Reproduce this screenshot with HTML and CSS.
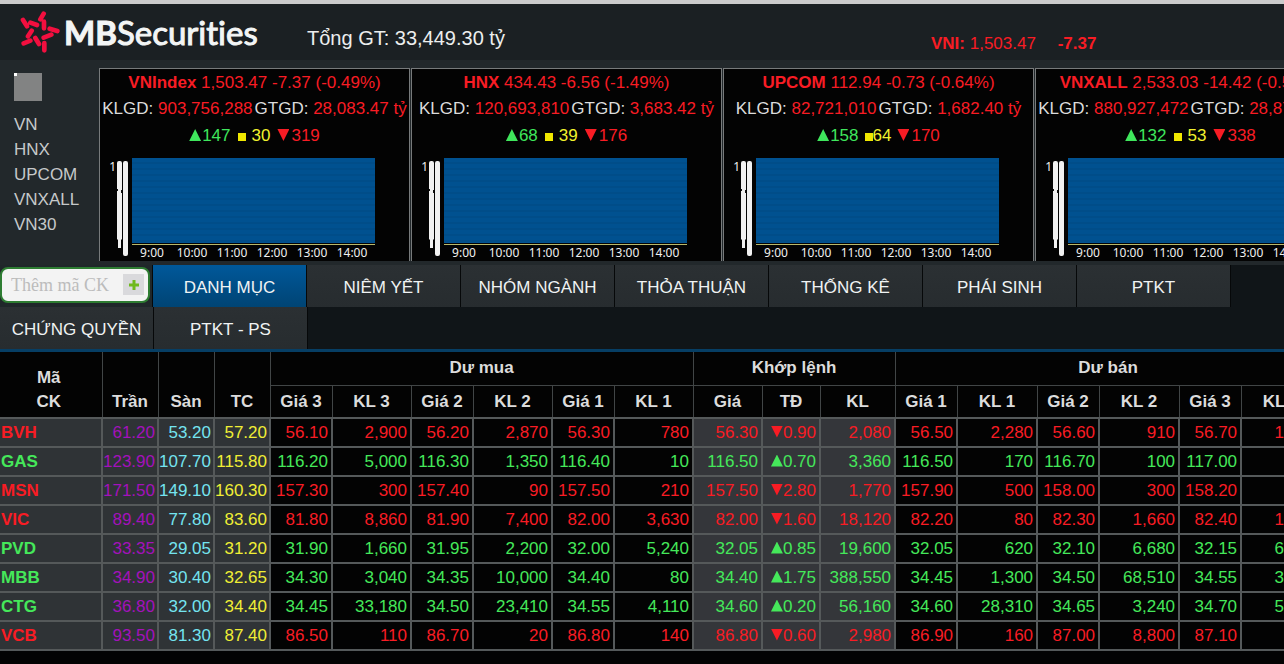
FILE: index.html
```html
<!DOCTYPE html>
<html lang="vi">
<head>
<meta charset="utf-8">
<title>MBSecurities</title>
<link rel="stylesheet" href="styles.css">
</head>
<body>
<header class="topbar">
  <a class="logo" href="#">
    <svg class="logo-mark" viewBox="30 18 123 126" aria-hidden="true">
      <path d="M91 43L101 26M102 50V70M61 53L81 60M39 45L51 64M119 71L142 78M101 98L124 89M54 94L65 77M41 115L61 107M76 99L87 117M103 114V136"/>
    </svg>
    <span class="logo-text"><b>MB</b>Securities</span>
  </a>
  <p class="total">Tổng GT: 33,449.30 tỷ</p>
  <p class="ticker"><b>VNI:</b> 1,503.47 <b class="ticker-change">-7.37</b></p>
</header>

<section class="market">
  <nav class="indices">
    <span class="thumb"></span>
    <a href="#">VN</a>
    <a href="#">HNX</a>
    <a href="#">UPCOM</a>
    <a href="#">VNXALL</a>
    <a href="#">VN30</a>
  </nav>
  <div class="cards">
    <article class="card">
      <p class="red"><b>VNIndex</b> 1,503.47 -7.37 (-0.49%)</p>
      <p>KLGD: <span class="red">903,756,288</span><span class="turnover">GTGD: </span><span class="red">28,083.47 tỷ</span></p>
      <p class="counts"><span class="green"><i class="tri-up"></i>147</span><span class="yellow"><i class="box"></i>30</span><span class="red"><i class="tri-down"></i>319</span></p>
      <div class="chart">
        <span class="scale">1</span>
        <svg class="axis" viewBox="0 0 12 98" aria-hidden="true"><path d="M1 5Q1 3 3 3H4Q6 3 6 5V81L5 82V90H2V82L1 81ZM7 5Q7 3 9 3H10Q12 3 12 5V96Q12 98 10 98H9Q7 98 7 96Z"/><path class="notch" d="M1 31H2V33H1ZM5 32H6V35H5Z"/></svg>
        <div class="plot"></div>
        <div class="times"><span>9:00</span><span>10:00</span><span>11:00</span><span>12:00</span><span>13:00</span><span>14:00</span></div>
      </div>
    </article>
    <article class="card">
      <p class="red"><b>HNX</b> 434.43 -6.56 (-1.49%)</p>
      <p>KLGD: <span class="red">120,693,810</span><span class="turnover">GTGD: </span><span class="red">3,683.42 tỷ</span></p>
      <p class="counts"><span class="green"><i class="tri-up"></i>68</span><span class="yellow"><i class="box"></i>39</span><span class="red"><i class="tri-down"></i>176</span></p>
      <div class="chart">
        <span class="scale">1</span>
        <svg class="axis" viewBox="0 0 12 98" aria-hidden="true"><path d="M1 5Q1 3 3 3H4Q6 3 6 5V81L5 82V90H2V82L1 81ZM7 5Q7 3 9 3H10Q12 3 12 5V96Q12 98 10 98H9Q7 98 7 96Z"/><path class="notch" d="M1 31H2V33H1ZM5 32H6V35H5Z"/></svg>
        <div class="plot"></div>
        <div class="times"><span>9:00</span><span>10:00</span><span>11:00</span><span>12:00</span><span>13:00</span><span>14:00</span></div>
      </div>
    </article>
    <article class="card">
      <p class="red"><b>UPCOM</b> 112.94 -0.73 (-0.64%)</p>
      <p>KLGD: <span class="red">82,721,010</span><span class="turnover">GTGD: </span><span class="red">1,682.40 tỷ</span></p>
      <p class="counts counts-tight"><span class="green"><i class="tri-up"></i>158</span><span class="yellow"><i class="box"></i>64</span><span class="red"><i class="tri-down"></i>170</span></p>
      <div class="chart">
        <span class="scale">1</span>
        <svg class="axis" viewBox="0 0 12 98" aria-hidden="true"><path d="M1 5Q1 3 3 3H4Q6 3 6 5V81L5 82V90H2V82L1 81ZM7 5Q7 3 9 3H10Q12 3 12 5V96Q12 98 10 98H9Q7 98 7 96Z"/><path class="notch" d="M1 31H2V33H1ZM5 32H6V35H5Z"/></svg>
        <div class="plot"></div>
        <div class="times"><span>9:00</span><span>10:00</span><span>11:00</span><span>12:00</span><span>13:00</span><span>14:00</span></div>
      </div>
    </article>
    <article class="card">
      <p class="red"><b>VNXALL</b> 2,533.03 -14.42 (-0.57%)</p>
      <p>KLGD: <span class="red">880,927,472</span><span class="turnover">GTGD: </span><span class="red">28,870.00 tỷ</span></p>
      <p class="counts"><span class="green"><i class="tri-up"></i>132</span><span class="yellow"><i class="box"></i>53</span><span class="red"><i class="tri-down"></i>338</span></p>
      <div class="chart">
        <span class="scale">1</span>
        <svg class="axis" viewBox="0 0 12 98" aria-hidden="true"><path d="M1 5Q1 3 3 3H4Q6 3 6 5V81L5 82V90H2V82L1 81ZM7 5Q7 3 9 3H10Q12 3 12 5V96Q12 98 10 98H9Q7 98 7 96Z"/><path class="notch" d="M1 31H2V33H1ZM5 32H6V35H5Z"/></svg>
        <div class="plot"></div>
        <div class="times"><span>9:00</span><span>10:00</span><span>11:00</span><span>12:00</span><span>13:00</span><span>14:00</span></div>
      </div>
    </article>
  </div>
</section>

<nav class="tabs">
  <form class="add-code">
    <input type="text" placeholder="Thêm mã CK" aria-label="Thêm mã CK">
    <button type="button" aria-label="Thêm"><svg viewBox="0 0 12 12" aria-hidden="true"><path d="M6 1V11M1 6H11"/></svg></button>
  </form>
  <a class="tab active" href="#">DANH MỤC</a>
  <a class="tab" href="#">NIÊM YẾT</a>
  <a class="tab" href="#">NHÓM NGÀNH</a>
  <a class="tab" href="#">THỎA THUẬN</a>
  <a class="tab" href="#">THỐNG KÊ</a>
  <a class="tab" href="#">PHÁI SINH</a>
  <a class="tab" href="#">PTKT</a>
  <a class="tab" href="#">CHỨNG QUYỀN</a>
  <a class="tab" href="#">PTKT - PS</a>
</nav>

<main class="board">
<table>
  <colgroup>
    <col class="w-code"><col class="w-ref"><col class="w-ref"><col class="w-ref">
    <col class="w-price"><col class="w-vol"><col class="w-price"><col class="w-vol"><col class="w-price"><col class="w-vol">
    <col class="w-match"><col class="w-change"><col class="w-total">
    <col class="w-price"><col class="w-ask"><col class="w-price"><col class="w-ask"><col class="w-price"><col class="w-ask">
  </colgroup>
  <thead>
    <tr>
      <th rowspan="2" class="code-head">Mã<br>CK</th><th rowspan="2">Trần</th><th rowspan="2">Sàn</th><th rowspan="2">TC</th>
      <th colspan="6" class="group">Dư mua</th><th colspan="3" class="group">Khớp lệnh</th><th colspan="6" class="group">Dư bán</th>
    </tr>
    <tr>
      <th>Giá 3</th><th>KL 3</th><th>Giá 2</th><th>KL 2</th><th>Giá 1</th><th>KL 1</th>
      <th>Giá</th><th>TĐ</th><th>KL</th>
      <th>Giá 1</th><th>KL 1</th><th>Giá 2</th><th>KL 2</th><th>Giá 3</th><th>KL 3</th>
    </tr>
  </thead>
  <tbody>
    <tr class="down"><th scope="row">BVH</th><td class="ceil">61.20</td><td class="floor">53.20</td><td class="base">57.20</td><td>56.10</td><td>2,900</td><td>56.20</td><td>2,870</td><td>56.30</td><td>780</td><td class="hit">56.30</td><td class="hit"><i class="tri-down"></i>0.90</td><td class="hit">2,080</td><td>56.50</td><td>2,280</td><td>56.60</td><td>910</td><td>56.70</td><td>1,000</td></tr>
    <tr class="up"><th scope="row">GAS</th><td class="ceil">123.90</td><td class="floor">107.70</td><td class="base">115.80</td><td>116.20</td><td>5,000</td><td>116.30</td><td>1,350</td><td>116.40</td><td>10</td><td class="hit">116.50</td><td class="hit"><i class="tri-up"></i>0.70</td><td class="hit">3,360</td><td>116.50</td><td>170</td><td>116.70</td><td>100</td><td>117.00</td><td></td></tr>
    <tr class="down"><th scope="row">MSN</th><td class="ceil">171.50</td><td class="floor">149.10</td><td class="base">160.30</td><td>157.30</td><td>300</td><td>157.40</td><td>90</td><td>157.50</td><td>210</td><td class="hit">157.50</td><td class="hit"><i class="tri-down"></i>2.80</td><td class="hit">1,770</td><td>157.90</td><td>500</td><td>158.00</td><td>300</td><td>158.20</td><td></td></tr>
    <tr class="down"><th scope="row">VIC</th><td class="ceil">89.40</td><td class="floor">77.80</td><td class="base">83.60</td><td>81.80</td><td>8,860</td><td>81.90</td><td>7,400</td><td>82.00</td><td>3,630</td><td class="hit">82.00</td><td class="hit"><i class="tri-down"></i>1.60</td><td class="hit">18,120</td><td>82.20</td><td>80</td><td>82.30</td><td>1,660</td><td>82.40</td><td>1,000</td></tr>
    <tr class="up"><th scope="row">PVD</th><td class="ceil">33.35</td><td class="floor">29.05</td><td class="base">31.20</td><td>31.90</td><td>1,660</td><td>31.95</td><td>2,200</td><td>32.00</td><td>5,240</td><td class="hit">32.05</td><td class="hit"><i class="tri-up"></i>0.85</td><td class="hit">19,600</td><td>32.05</td><td>620</td><td>32.10</td><td>6,680</td><td>32.15</td><td>6,000</td></tr>
    <tr class="up"><th scope="row">MBB</th><td class="ceil">34.90</td><td class="floor">30.40</td><td class="base">32.65</td><td>34.30</td><td>3,040</td><td>34.35</td><td>10,000</td><td>34.40</td><td>80</td><td class="hit">34.40</td><td class="hit"><i class="tri-up"></i>1.75</td><td class="hit">388,550</td><td>34.45</td><td>1,300</td><td>34.50</td><td>68,510</td><td>34.55</td><td>3,000</td></tr>
    <tr class="up"><th scope="row">CTG</th><td class="ceil">36.80</td><td class="floor">32.00</td><td class="base">34.40</td><td>34.45</td><td>33,180</td><td>34.50</td><td>23,410</td><td>34.55</td><td>4,110</td><td class="hit">34.60</td><td class="hit"><i class="tri-up"></i>0.20</td><td class="hit">56,160</td><td>34.60</td><td>28,310</td><td>34.65</td><td>3,240</td><td>34.70</td><td>5,000</td></tr>
    <tr class="down"><th scope="row">VCB</th><td class="ceil">93.50</td><td class="floor">81.30</td><td class="base">87.40</td><td>86.50</td><td>110</td><td>86.70</td><td>20</td><td>86.80</td><td>140</td><td class="hit">86.80</td><td class="hit"><i class="tri-down"></i>0.60</td><td class="hit">2,980</td><td>86.90</td><td>160</td><td>87.00</td><td>8,800</td><td>87.10</td><td></td></tr>
  </tbody>
</table>
</main>
</body>
</html>
```
FILE: styles.css
```css
* {
  box-sizing: border-box;
}

body {
  margin: 0;
  background: #030303;
  color: #dcdcdc;
  font: 17px/26px "Liberation Sans", Arial, sans-serif;
  overflow-x: hidden;
}

p {
  margin: 0;
}

a {
  color: inherit;
  text-decoration: none;
}

.red { color: #f81c24; }
.green { color: #3fe65c; }
.yellow { color: #f2f22e; }

.tri-up,
.tri-down {
  display: inline-block;
  width: 12px;
  height: 12px;
  background: currentColor;
}

.tri-up { clip-path: polygon(50% 0, 100% 100%, 0 100%); }
.tri-down { clip-path: polygon(0 0, 100% 0, 50% 100%); }

/* Header */
.topbar {
  display: flex;
  height: 60px;
  padding: 0 20px;
  border-top: 4px solid #cbcbcb;
  background: #1b2023;
}

.logo {
  display: flex;
  align-items: center;
  gap: 3px;
  width: 287px;
  color: #f3f5f5;
}

.logo-mark {
  width: 41px;
  height: 42px;
}

.logo-mark path {
  fill: none;
  stroke: #f30f3f;
  stroke-width: 14;
  stroke-linecap: round;
}

.logo-text {
  font: 33px/42px Lato, "Open Sans", sans-serif;
  font-variant-ligatures: none;
  -webkit-text-stroke: 1px currentColor;
}

.logo-text b {
  font-weight: 700;
}

.total {
  flex: 1;
  padding-top: 21px;
  color: #eceeee;
  font-size: 20px;
}

.ticker {
  width: 333px;
  padding-top: 27px;
  color: #f81c24;
}

.ticker-change {
  margin-left: 17px;
}

/* Index overview */
.market {
  display: flex;
  padding: 8px 0 4px;
  background: #22282b;
}

.indices {
  display: flex;
  flex: 0 0 99px;
  flex-direction: column;
  padding: 5px 0 0 14px;
  color: #c6c9ca;
  line-height: 25px;
}

.thumb {
  width: 28px;
  height: 28px;
  margin-bottom: 11px;
  background: linear-gradient(#fff, #fff) no-repeat 0 0 / 3px 3px, #828383;
}

.cards {
  display: flex;
  flex: 1;
  gap: 1px;
  min-width: 0;
  overflow: hidden;
}

.card {
  flex: 0 0 311px;
  padding-top: 1px;
  border: 1px solid #777a7b;
  border-bottom: 0;
  background: #030303;
  text-align: center;
  white-space: nowrap;
}

.turnover {
  margin-left: 2px;
}

.counts {
  display: flex;
  justify-content: center;
  gap: 7px;
  line-height: 28px;
}

.counts .tri-up { margin-right: 1px; }
.counts .tri-down { margin-right: 2px; }

.box {
  display: inline-block;
  width: 8px;
  height: 8px;
  margin-right: 6px;
  background: #f0e800;
}

.counts-tight { gap: 6px; }
.counts-tight .box { margin-right: 0; }

.chart {
  display: grid;
  grid-template-columns: 16px 12px 4px 243px;
  grid-template-rows: 87px 16px;
  padding-top: 8px;
}

.scale {
  grid-area: 1 / 1;
  color: #eee;
  font: 12px/18px "Noto Sans", sans-serif;
  text-align: right;
}

.axis {
  grid-area: 1 / 2 / 3 / 3;
  width: 12px;
  height: 98px;
}

.axis path { fill: #f1f1f1; }
.axis .notch { fill: #111; }

.plot {
  grid-area: 1 / 4;
  border-bottom: 1px solid #b9b96b;
  background: repeating-linear-gradient(#005190 0 4px, #004d89 4px 6px) no-repeat 0 0 / 100% 85px;
}

.times {
  display: grid;
  grid-area: 2 / 4;
  grid-template-columns: repeat(6, 40px);
  color: #f0f0f0;
  font: 12px/15px "Noto Sans", sans-serif;
}

/* Tabs */
.tabs {
  display: flex;
  flex-wrap: wrap;
  border-bottom: 3px solid #063e64;
  background: #101518;
}

.tab {
  width: 154px;
  height: 42px;
  border-right: 1px solid #060809;
  background: linear-gradient(#2b3033, #272c2f);
  color: #f0f3f3;
  line-height: 45px;
  text-align: center;
}

.tab.active {
  background: linear-gradient(#00589a, #004474);
}

.add-code {
  display: flex;
  align-items: flex-start;
  width: 153px;
  height: 42px;
  padding: 2px 2px 0 0;
  border-right: 1px solid #060809;
  background: #20272a;
}

.add-code input {
  flex: 1;
  min-width: 0;
  height: 36px;
  padding: 0 30px 0 9px;
  border: 2px solid #2e7d32;
  border-radius: 8px;
  background: #f3f3f3;
  font: 18px/24px "Liberation Serif", serif;
}

.add-code input::placeholder {
  color: #bcbcbc;
}

.add-code button {
  display: grid;
  place-items: center;
  width: 21px;
  height: 21px;
  margin: 7px 6px 0 -27px;
  padding: 0;
  border: 0;
  background: #d9d9dc;
}

.add-code svg {
  width: 12px;
  height: 12px;
}

.add-code path {
  fill: none;
  stroke: #6fb91c;
  stroke-width: 3;
}

/* Price board */
.board {
  overflow: hidden;
}

table {
  width: 1321px;
  border-collapse: collapse;
  table-layout: fixed;
}

.w-code { width: 102px; }
.w-ref { width: 56px; }
.w-price { width: 62px; }
.w-vol { width: 79px; }
.w-match { width: 69px; }
.w-change { width: 58px; }
.w-total { width: 75px; }
.w-ask { width: 80px; }

thead th {
  height: 33px;
  padding: 0 0 3px;
  border: 1px solid #414546;
  border-top: 0;
  border-left: 0;
  line-height: 24px;
  vertical-align: bottom;
}

thead .group {
  padding-bottom: 5px;
}

thead .code-head {
  padding-right: 4px;
}

tbody th,
tbody td {
  height: 29px;
  padding: 0 3px 0 0;
  border: 2px solid #55595a;
  border-left: 0;
  line-height: 26px;
  text-align: right;
  white-space: nowrap;
}

tbody th {
  padding-left: 1px;
  background: #2f3336;
  text-align: left;
}

.down { color: #f81c24; }
.up { color: #45e85a; }

tbody td.ceil,
tbody td.floor,
tbody td.base {
  padding-right: 2px;
  background: #2f3336;
}

.ceil { color: #a411bb; }
.floor { color: #74e4f0; }
.base { color: #f0ee35; }
.hit { background: #34363a; }
```
